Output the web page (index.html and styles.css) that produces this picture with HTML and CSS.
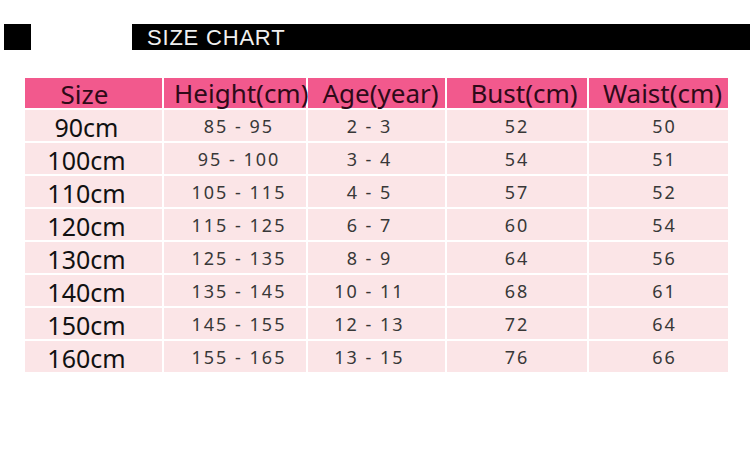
FILE: index.html
```html
<!DOCTYPE html>
<html>
<head>
<meta charset="utf-8">
<link rel="stylesheet" href="styles.css">
</head>
<body>
<div class="titlebar">
  <div class="square"></div>
  <div class="bar">SIZE CHART</div>
</div>
<div class="chart">
  <div class="hd c1 size-hd">Size</div>
  <div class="hd c2">Height(cm)</div>
  <div class="hd c3">Age(year)</div>
  <div class="hd c4">Bust(cm)</div>
  <div class="hd c5">Waist(cm)</div>

  <div class="cell sz">90cm</div><div class="cell num c2">85 - 95</div><div class="cell num c3">2 - 3</div><div class="cell num c4">52</div><div class="cell num c5">50</div>
  <div class="cell sz">100cm</div><div class="cell num c2">95 - 100</div><div class="cell num c3">3 - 4</div><div class="cell num c4">54</div><div class="cell num c5">51</div>
  <div class="cell sz">110cm</div><div class="cell num c2">105 - 115</div><div class="cell num c3">4 - 5</div><div class="cell num c4">57</div><div class="cell num c5">52</div>
  <div class="cell sz">120cm</div><div class="cell num c2">115 - 125</div><div class="cell num c3">6 - 7</div><div class="cell num c4">60</div><div class="cell num c5">54</div>
  <div class="cell sz">130cm</div><div class="cell num c2">125 - 135</div><div class="cell num c3">8 - 9</div><div class="cell num c4">64</div><div class="cell num c5">56</div>
  <div class="cell sz">140cm</div><div class="cell num c2">135 - 145</div><div class="cell num c3">10 - 11</div><div class="cell num c4">68</div><div class="cell num c5">61</div>
  <div class="cell sz">150cm</div><div class="cell num c2">145 - 155</div><div class="cell num c3">12 - 13</div><div class="cell num c4">72</div><div class="cell num c5">64</div>
  <div class="cell sz">160cm</div><div class="cell num c2">155 - 165</div><div class="cell num c3">13 - 15</div><div class="cell num c4">76</div><div class="cell num c5">66</div>
</div>
</body>
</html>
```
FILE: styles.css
```css
html, body {
  margin: 0;
  padding: 0;
  background: #ffffff;
}
body {
  padding-top: 24px;
  font-family: "Noto Sans", "Open Sans", sans-serif;
}
.titlebar {
  display: flex;
  height: 26px;
  padding-left: 4px;
}
.square {
  width: 27px;
  background: #000;
  margin-right: 101px;
}
.bar {
  flex: 1;
  background: #000;
  color: #f0f0f0;
  font-family: "Liberation Sans", Arial, sans-serif;
  font-size: 22px;
  line-height: 27px;
  padding-left: 15px;
  letter-spacing: 0.8px;
}
.chart {
  margin: 28px 0 0 25px;
  width: 703px;
  display: grid;
  grid-template-columns: 137px 142px 137px 140px 139px;
  grid-template-rows: 30px repeat(8, 31px);
  gap: 2px;
}
.hd {
  background: #f2598d;
  color: #2e0a18;
  font-size: 26px;
  line-height: 30px;
  text-align: center;
  white-space: nowrap;
}
.size-hd {
  padding-top: 3px;
  line-height: 27px;
  padding-right: 18px;
}
.hd.c2 { padding-left: 10px; }
.hd.c3 { padding-left: 8px; }
.hd.c4 { padding-left: 14px; }
.hd.c5 { padding-left: 8px; }
.cell {
  background: #fbe5e7;
  text-align: center;
  white-space: nowrap;
}
.sz {
  font-size: 25px;
  line-height: 31px;
  color: #111;
  padding-top: 2px;
  padding-right: 14px;
}
.num {
  font-size: 18px;
  line-height: 31px;
  color: #383838;
  letter-spacing: 2px;
  padding-top: 1px;
}
.num.c2 { padding-left: 8px; }
.num.c3 { padding-right: 14px; }
.num.c5 { padding-left: 12px; }
```
